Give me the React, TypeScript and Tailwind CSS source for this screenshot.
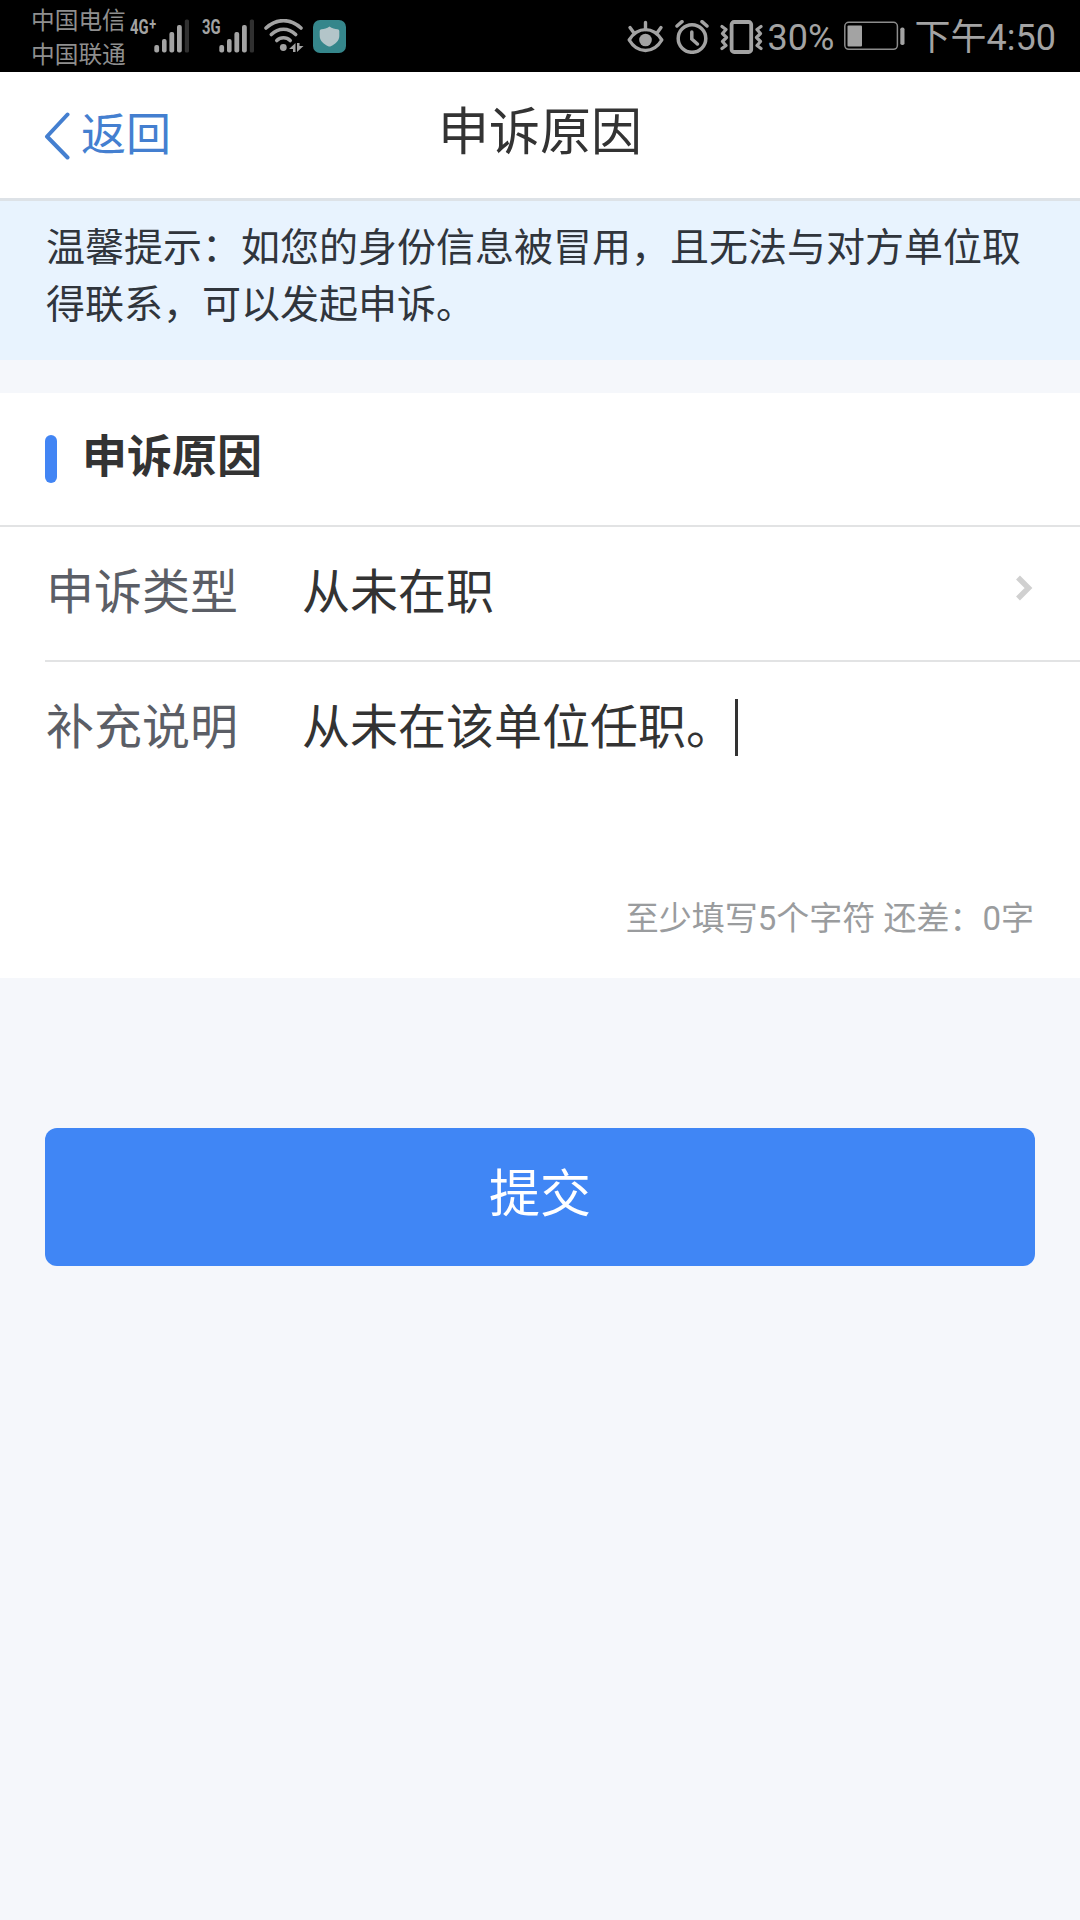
import React from "react";

const NOTICE =
  "温馨提示：如您的身份信息被冒用，且无法与对方单位取得联系，可以发起申诉。";

const SignalIcon = () => (
  <svg className="w-[36px] h-[34px]" viewBox="0 0 36 34">
    <g fill="#a3a3a3">
      <rect x="0.3" y="26" width="4.8" height="7.5" rx="2" />
      <rect x="8" y="20" width="4.6" height="13.5" rx="2" />
      <rect x="15.4" y="13" width="4.8" height="20.5" rx="2" />
      <rect x="23" y="6" width="4.8" height="27.5" rx="2" />
    </g>
    <rect x="30.8" y="0.5" width="4.2" height="33" rx="1.5" fill="#303030" />
  </svg>
);

const WifiIcon = () => (
  <svg className="w-[40px] h-[34px]" viewBox="0 0 40 34">
    <g fill="none" stroke="#a3a3a3" strokeWidth="3.6" strokeLinecap="round">
      <path d="M2 9C12.5 -0.8 26.5 -0.8 37 9" />
      <path d="M7.3 15.5C14.5 8.4 24.5 8.4 31.7 15.5" />
      <path d="M12.8 21.5C16.5 17.8 22.5 17.8 26.2 21.5" />
    </g>
    <circle cx="19.3" cy="28.5" r="3.4" fill="#a3a3a3" />
    <path d="M31.5 24v9h-2.5v-3h-4zM33 24h2.500v3H39.500L33 33z" fill="#a3a3a3" />
  </svg>
);

const ShieldIcon = () => (
  <div className="w-[33px] h-[33px] rounded-[7px] bg-[#35868b] flex items-center justify-center">
    <svg className="w-[21px] h-[21px]" viewBox="0 0 21 21">
      <path
        d="M10.5 0.5C13 2.3 16 3 18.5 3.2Q20.3 3.4 20.3 5V10c0 5-4.5 8.5-8.5 10.2Q10.5 20.8 9.2 20.2C5.2 18.5.7 15 .7 10V5Q.7 3.4 2.5 3.2C5 3 8 2.3 10.5.5z"
        fill="#b3c5c9"
      />
    </svg>
  </div>
);

const EyeIcon = () => (
  <svg className="w-[37px] h-[33px]" viewBox="0 0 37 33">
    <g fill="none" stroke="#a3a3a3" strokeWidth="3.4" strokeLinecap="round" strokeLinejoin="round">
      <path d="M2.2 20C10.5 6.2 26.5 6.2 34.8 20C26.5 34 10.5 34 2.2 20z" />
      <path d="M18.5 2.5v7M3 7.5l4 5.5M34 7.5l-4 5.5" />
    </g>
    <circle cx="18.5" cy="20" r="6.3" fill="#a3a3a3" />
  </svg>
);

const AlarmIcon = () => (
  <svg className="w-[34px] h-[34px]" viewBox="0 0 34 34">
    <g fill="none" stroke="#a3a3a3" strokeWidth="3.5" strokeLinecap="round">
      <circle cx="17" cy="18.5" r="13.8" />
      <path d="M16.8 12v7l5.6 5M2 6l5-4.3M32 6l-5-4.3" />
    </g>
  </svg>
);

const VibrateIcon = () => (
  <svg className="w-[43px] h-[34px]" viewBox="0 0 43 34">
    <g fill="none" stroke="#a3a3a3" strokeLinecap="round" strokeLinejoin="round">
      <rect x="11.6" y="2" width="19.6" height="30" rx="2.5" strokeWidth="3.8" />
      <path
        d="M2 6.5l4 3-3.5 4 4 4-4 4 3.5 4-4 3M41 6.5l-4 3 3.5 4-4 4 4 4-3.5 4 4 3"
        strokeWidth="3.2"
      />
    </g>
  </svg>
);

const BatteryIcon = () => (
  <svg className="w-[62px] h-[30px]" viewBox="0 0 62 30">
    <rect x="0.8" y="1.3" width="52.6" height="27" rx="4" fill="none" stroke="#8c8c8c" strokeWidth="1.5" />
    <rect x="3.5" y="4.5" width="14.5" height="21" rx="1" fill="#a3a3a3" />
    <rect x="56.3" y="6.5" width="4.2" height="17.5" rx="1.8" fill="#a3a3a3" />
  </svg>
);

const StatusBar = () => (
  <div className="h-[72px] bg-black text-[#a3a3a3] flex items-start overflow-hidden">
    <div className="ml-[31px] pt-[5px] w-[95px] text-[23.7px] leading-[33.5px] whitespace-nowrap text-[#8f8f8f]">
      <p>中国电信</p>
      <p>中国联通</p>
    </div>
    <div className="ml-[4px] mt-[16px] w-[24px] text-[20px] leading-[22px] font-bold whitespace-nowrap">
      <span className="inline-flex items-start origin-left scale-x-[0.74]">
        4G<span className="ml-[1px] -mt-[3px] text-[17px]">+</span>
      </span>
    </div>
    <div className="mt-[18.5px]">
      <SignalIcon />
    </div>
    <div className="ml-[11.5px] mt-[16px] w-[17.5px] text-[20px] leading-[22px] font-bold">
      <span className="inline-block origin-left scale-x-[0.74]">3G</span>
    </div>
    <div className="mt-[18.5px]">
      <SignalIcon />
    </div>
    <div className="ml-[9px] mt-[19px]">
      <WifiIcon />
    </div>
    <div className="ml-[9px] mt-[20px]">
      <ShieldIcon />
    </div>
    <div className="ml-auto mt-[20px]">
      <EyeIcon />
    </div>
    <div className="ml-[11px] mt-[19.5px]">
      <AlarmIcon />
    </div>
    <div className="ml-[10.5px] mt-[19.5px]">
      <VibrateIcon />
    </div>
    <p className="ml-[5px] mt-[17px] w-[76px] text-[36px] leading-[42px]">30%</p>
    <div className="mt-[21px]">
      <BatteryIcon />
    </div>
    <p className="ml-[9px] mr-[24px] mt-[17px] text-[36px] leading-[42px] whitespace-nowrap">
      下午4:50
    </p>
  </div>
);

const Header = () => (
  <header className="h-[129px] bg-white border-b-[3px] border-[#dde2e7] grid grid-cols-3 items-start">
    <button className="ml-[43px] mt-[30px] flex items-center text-[45px] leading-[67px] text-[#447fd0]">
      <svg className="w-[28px] h-[48px] mr-[10px]" viewBox="0 0 28 48">
        <path
          d="M24.5 2.5L4 24.5l20.5 21"
          fill="none"
          stroke="currentColor"
          strokeWidth="4"
          strokeLinecap="round"
          strokeLinejoin="round"
        />
      </svg>
      返回
    </button>
    <h1 className="mt-[25px] text-center text-[51px] leading-[72px] text-[#333333]">申诉原因</h1>
  </header>
);

const AppealForm = () => (
  <section className="mt-[33px] h-[585px] bg-white flex flex-col">
    <div className="h-[134px] pl-[45px] flex items-center border-b-2 border-[#e2e3e4]">
      <div className="w-[12px] h-[48px] rounded-full bg-[#4285f4]" />
      <h2 className="ml-[25px] pb-[2px] text-[45px] leading-[60px] font-bold text-[#333333]">申诉原因</h2>
    </div>
    <div className="ml-[45px] h-[135px] pr-[46px] flex items-center border-b-2 border-[#e2e3e4] text-[48px] leading-[72px]">
      <span className="w-[257px] pl-px pb-px text-[#5b5e66]">申诉类型</span>
      <span className="pb-px text-[#333333]">从未在职</span>
      <svg className="ml-auto w-[20px] h-[28px] mb-[11px]" viewBox="0 0 20 28">
        <path d="M4 3.5L14.5 14L4 24.5" fill="none" stroke="#d0d0d0" strokeWidth="5.5" />
      </svg>
    </div>
    <div className="ml-[45px] pt-[30px] flex text-[48px] leading-[72px]">
      <span className="w-[257px] pl-px text-[#5b5e66]">补充说明</span>
      <span className="text-[#333333]">从未在该单位任职。</span>
      <span className="ml-px mt-[7px] w-[3px] h-[57px] bg-[#333333]" />
    </div>
    <p className="mt-auto mb-[35px] pr-[46px] text-right text-[33px] leading-[48px] text-[#9a9c9e]">
      至少填写5个字符 还差：0字
    </p>
  </section>
);

export default function App() {
  return (
    <div className="w-[1080px] h-[1920px] overflow-hidden bg-[#f5f7fb] font-[Roboto,'Noto_Sans_CJK_SC',sans-serif]">
      <StatusBar />
      <Header />
      <p className="h-[159px] pt-[19px] pl-[46px] pr-[44px] bg-[#e8f3fe] text-[39px] leading-[57px] text-[#30353c]">
        {NOTICE}
      </p>
      <AppealForm />
      <button className="block mx-[45px] mt-[150px] w-[990px] h-[138px] pb-[5px] rounded-[12px] bg-[#4086f5] text-[51px] leading-[72px] text-white">
        提交
      </button>
    </div>
  );
}
